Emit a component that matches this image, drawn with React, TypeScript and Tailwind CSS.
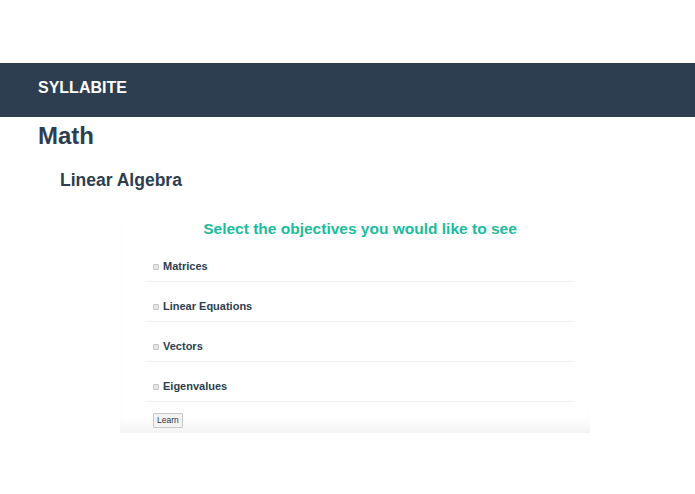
import React from 'react';

const objectives = ['Matrices', 'Linear Equations', 'Vectors', 'Eigenvalues'];

const App = () => {
  return (
    <div className="min-h-screen bg-white font-['Liberation_Sans',Arial,sans-serif] text-[#2c3e50]">
      {/* Top spacer */}
      <div className="h-[63px]" />

      {/* Navbar */}
      <nav className="h-[54px] bg-[#2c3e50] flex items-center px-[38px] pb-[4px]">
        <span className="text-white font-bold text-[16px] leading-none">SYLLABITE</span>
      </nav>

      {/* Subject */}
      <h1 className="ml-[38px] mt-[5px] text-[24px] leading-[28px] font-bold">Math</h1>
      <h2 className="ml-[60px] mt-[20px] text-[17.5px] leading-[20px] font-bold">Linear Algebra</h2>

      {/* Objectives card */}
      <div className="ml-[120px] w-[470px] mt-[29px] pl-[25px] pr-[15px] pb-[3px] shadow-[inset_0_-14px_16px_-10px_rgba(0,0,0,0.07)]">
        <h3 className="text-center text-[15.5px] leading-[20px] font-bold text-[#1abc9c]">
          Select the objectives you would like to see
        </h3>

        <ul className="mt-[3px]">
          {objectives.map((item) => (
            <li key={item} className="pt-[18px] pb-[8px] pl-[8px] border-b border-[#f0f0f0]">
              <label className="flex items-center gap-[4px] text-[11px] leading-[13px] font-bold">
                <input
                  type="checkbox"
                  className="appearance-none w-[6px] h-[6px] border border-[#c4c4c4] rounded-[1px] bg-[#e6e6e6]"
                />
                <span>{item}</span>
              </label>
            </li>
          ))}
        </ul>

        <button className="ml-[8px] mt-[11px] h-[15px] px-[3px] border border-[#c8c8c8] bg-[#f3f3f3] text-[#333] text-[8.5px] leading-none rounded-[1px]">
          Learn
        </button>
      </div>
    </div>
  );
};

export default App;
